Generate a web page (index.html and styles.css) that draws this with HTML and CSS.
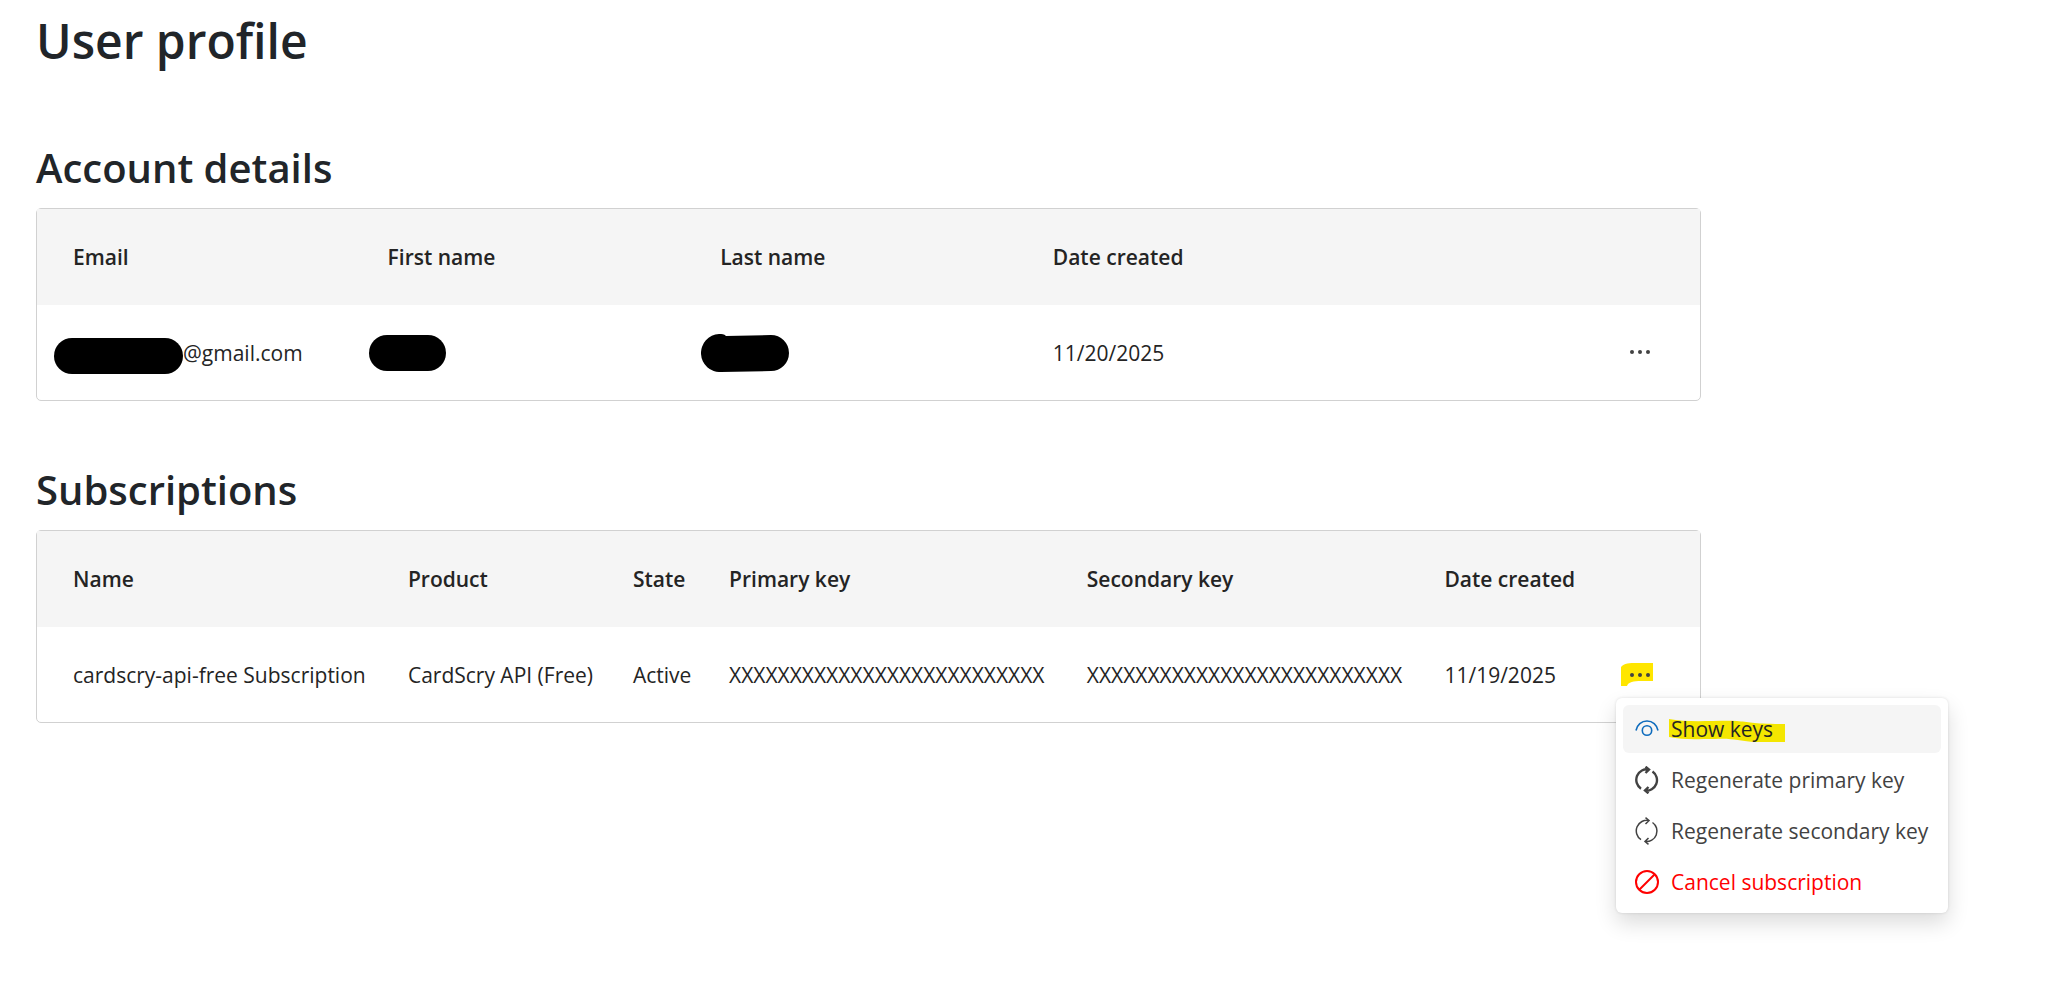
FILE: index.html
```html
<!DOCTYPE html>
<html lang="en">
<head>
    <meta charset="UTF-8">
    <meta name="viewport" content="width=device-width, initial-scale=1.0">
    <title>User profile</title>
    <link rel="stylesheet" href="styles.css">
</head>
<body>
    <main class="profile">
        <h1>User profile</h1>

        <section>
            <h2>Account details</h2>
            <div class="table-box">
                <table class="account-table">
                    <thead>
                        <tr>
                            <th>Email</th>
                            <th>First name</th>
                            <th>Last name</th>
                            <th>Date created</th>
                            <th></th>
                        </tr>
                    </thead>
                    <tbody>
                        <tr>
                            <td><span class="email"><span class="redacted redacted-email"></span>@gmail.com</span></td>
                            <td><span class="redacted redacted-first"></span></td>
                            <td>
                                <svg class="redacted-last" viewBox="0 0 88 38" aria-hidden="true">
                                    <path d="M18 0C21 0 23 0 25 2L70 1A18 18 0 0 1 70 37L20 38A19 19 0 0 1 18 0Z"/>
                                </svg>
                            </td>
                            <td>11/20/2025</td>
                            <td>
                                <button type="button" class="more" aria-label="Account actions">
                                    <svg viewBox="0 0 48 48"><circle cx="32" cy="23" r="2"/><circle cx="24" cy="23" r="2"/><circle cx="16" cy="23" r="2"/></svg>
                                </button>
                            </td>
                        </tr>
                    </tbody>
                </table>
            </div>
        </section>

        <section>
            <h2>Subscriptions</h2>
            <div class="table-box">
                <table>
                    <thead>
                        <tr>
                            <th>Name</th>
                            <th>Product</th>
                            <th>State</th>
                            <th>Primary key</th>
                            <th>Secondary key</th>
                            <th>Date created</th>
                            <th></th>
                        </tr>
                    </thead>
                    <tbody>
                        <tr>
                            <td>cardscry-api-free Subscription</td>
                            <td>CardScry API (Free)</td>
                            <td>Active</td>
                            <td>XXXXXXXXXXXXXXXXXXXXXXXXXX</td>
                            <td>XXXXXXXXXXXXXXXXXXXXXXXXXX</td>
                            <td>11/19/2025</td>
                            <td>
                                <div class="menu-anchor">
                                    <button type="button" class="more" aria-label="Subscription actions" aria-expanded="true">
                                        <svg viewBox="0 0 48 48">
                                            <path class="marker" d="M5 35V16C8 12 14 12 20 12H37V30H25C18 30 12 31 11 35Z"/>
                                            <circle cx="32" cy="24" r="2"/><circle cx="24" cy="24" r="2"/><circle cx="16" cy="24" r="2"/>
                                        </svg>
                                    </button>
                                    <div class="menu" role="menu">
                                        <button type="button" role="menuitem" class="menu-item active">
                                            <svg class="icon eye" viewBox="0 0 24 28">
                                                <path d="M1 15.500C2 10 6.500 6 12 6S22 10 23 15.500"/>
                                                <circle cx="12" cy="15.500" r="4.700"/>
                                            </svg>
                                            <span class="marked">
                                                <svg class="marker-line" viewBox="0 0 116 23" aria-hidden="true">
                                                    <path class="marker" d="M0 0C20 4 48 1 68 2C80 3 84 5 116 5V23H84C70 22 64 19 46 20C26 20 14 21 0 18Z"/>
                                                </svg>
                                                <span class="marked-text">Show keys</span>
                                            </span>
                                        </button>
                                        <button type="button" role="menuitem" class="menu-item">
                                            <svg class="icon heavy" viewBox="0 0 24 28">
                                                <path d="M6 22.700A10.600 10.600 0 0 1 14 3.500M10.500 .700L14 3.500L10.500 7"/>
                                                <path d="M17.500 5.500A10.500 10.500 0 0 1 10 24.500M13.500 21L10 24.500L13.500 27.300"/>
                                            </svg>
                                            <span>Regenerate primary key</span>
                                        </button>
                                        <button type="button" role="menuitem" class="menu-item">
                                            <svg class="icon" viewBox="0 0 24 28">
                                                <path d="M6 22.700A10.600 10.600 0 0 1 14 3.500M10.500 .700L14 3.500L10.500 7"/>
                                                <path d="M17.500 5.500A10.500 10.500 0 0 1 10 24.500M13.500 21L10 24.500L13.500 27.300"/>
                                            </svg>
                                            <span>Regenerate secondary key</span>
                                        </button>
                                        <button type="button" role="menuitem" class="menu-item danger">
                                            <svg class="icon bold" viewBox="0 0 24 28">
                                                <circle cx="12" cy="14" r="11"/>
                                                <path d="M4.500 21.500L19.500 6.500"/>
                                            </svg>
                                            <span>Cancel subscription</span>
                                        </button>
                                    </div>
                                </div>
                            </td>
                        </tr>
                    </tbody>
                </table>
            </div>
        </section>
    </main>
</body>
</html>
```

FILE: styles.css
```css
* {
    box-sizing: border-box;
}
body {
    margin: 0;
    min-height: 100vh;
    background: #ffffff;
    color: #212529;
    font-family: 'Open Sans', 'Noto Sans', sans-serif;
    font-size: 21px;
    line-height: 28px;
}
.profile {
    max-width: 1737px;
    padding: 11px 36px;
}
h1, h2 {
    margin: 0;
    font-weight: 600;
}
h1 {
    font-size: 48px;
    line-height: 60px;
    padding-bottom: 8px;
}
h2 {
    font-size: 40px;
    line-height: 50px;
    margin-bottom: 15px;
}
section {
    margin-top: 64px;
}
.table-box {
    border: 1px solid #d1d1d1;
    border-radius: 5px;
}
table {
    width: 100%;
    border-collapse: collapse;
    color: #242424;
}
thead {
    background: #f5f5f5;
}
th, td {
    height: 96px;
    padding: 0 18px;
    text-align: left;
    white-space: nowrap;
}
td {
    height: 95px;
}
th {
    font-weight: 600;
}
th:first-child, td:first-child {
    padding-left: 36px;
}
th:last-child, td:last-child {
    padding-right: 36px;
}
.account-table {
    table-layout: fixed;
}
.email {
    display: flex;
    align-items: center;
}
.redacted {
    display: block;
    height: 36px;
    margin-left: -19px;
    border-radius: 18px;
    background: #000000;
}
.redacted-email {
    width: 129px;
    margin-top: 6px;
}
.redacted-first {
    width: 77px;
}
.redacted-last {
    display: block;
    width: 88px;
    height: 38px;
    margin-left: -19px;
}
.more {
    display: block;
    width: 48px;
    height: 48px;
    margin-left: auto;
    padding: 0;
    border: none;
    background: none;
    fill: #424242;
    cursor: pointer;
}
.more svg {
    display: block;
}
.marker {
    fill: #ffe600;
}
.menu-anchor {
    position: relative;
    width: 48px;
    margin-left: auto;
}
.menu {
    position: absolute;
    top: 47px;
    left: 0;
    display: flex;
    flex-direction: column;
    gap: 3px;
    padding: 7px;
    border-radius: 6px;
    background: #ffffff;
    box-shadow: 0 0 3px rgba(0, 0, 0, 0.12), 0 10px 21px rgba(0, 0, 0, 0.14);
}
.menu-item {
    display: flex;
    align-items: center;
    gap: 12px;
    padding: 10px 13px 10px 12px;
    border: none;
    border-radius: 6px;
    background: none;
    color: #424242;
    font: inherit;
    text-align: left;
    white-space: nowrap;
    cursor: pointer;
}
.menu-item.active {
    background: #f5f5f5;
    color: #242424;
}
.menu-item.danger {
    color: #ff0000;
}
.icon {
    width: 24px;
    height: 28px;
    fill: none;
    stroke: currentColor;
    stroke-width: 1.5;
}
.icon.bold {
    stroke-width: 2;
}
.icon.heavy {
    stroke-width: 2.4;
}
.icon.eye {
    stroke: #0f6cbd;
    stroke-width: 1.6;
}
.marked {
    position: relative;
}
.marker-line {
    position: absolute;
    top: 4px;
    left: -2px;
    width: 116px;
    height: 23px;
}
.marker-line .marker {
    fill: #f4e600;
}
.marked-text {
    position: relative;
}
```
